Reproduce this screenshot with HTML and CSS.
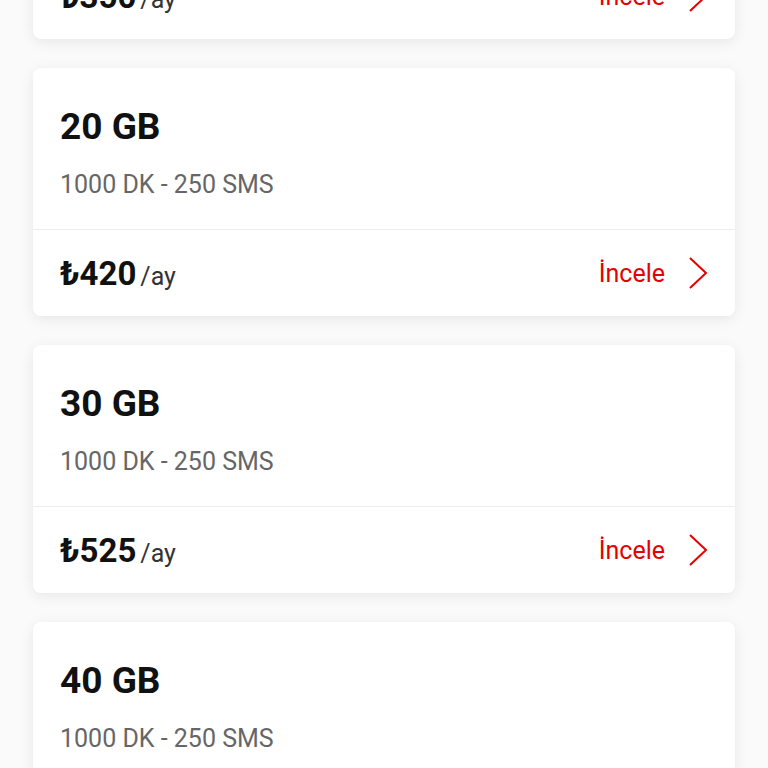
FILE: index.html
```html
<!doctype html>
<html lang="tr">
  <head>
    <meta charset="UTF-8" />
    <meta name="viewport" content="width=device-width, initial-scale=1.0" />
    <title>Paketler</title>
    <link rel="stylesheet" href="styles.css">
  </head>
  <body>
    <div id="package-list">
      <div class="package-card">
        <div class="package-info">
          <div class="package-title">10 GB</div>
          <div class="package-desc">1000 DK - 250 SMS</div>
        </div>
        <div class="package-footer">
          <div class="package-price"><span class="amount">₺350</span><span class="period">/ay</span></div>
          <a class="package-link" href="#">İncele
            <svg class="chevron" viewBox="0 0 20 32" width="20" height="32"><path d="M2 1 L18 16 L2 31" /></svg>
          </a>
        </div>
      </div>

      <div class="package-card">
        <div class="package-info">
          <div class="package-title">20 GB</div>
          <div class="package-desc">1000 DK - 250 SMS</div>
        </div>
        <div class="package-footer">
          <div class="package-price"><span class="amount">₺420</span><span class="period">/ay</span></div>
          <a class="package-link" href="#">İncele
            <svg class="chevron" viewBox="0 0 20 32" width="20" height="32"><path d="M2 1 L18 16 L2 31" /></svg>
          </a>
        </div>
      </div>

      <div class="package-card">
        <div class="package-info">
          <div class="package-title">30 GB</div>
          <div class="package-desc">1000 DK - 250 SMS</div>
        </div>
        <div class="package-footer">
          <div class="package-price"><span class="amount">₺525</span><span class="period">/ay</span></div>
          <a class="package-link" href="#">İncele
            <svg class="chevron" viewBox="0 0 20 32" width="20" height="32"><path d="M2 1 L18 16 L2 31" /></svg>
          </a>
        </div>
      </div>

      <div class="package-card">
        <div class="package-info">
          <div class="package-title">40 GB</div>
          <div class="package-desc">1000 DK - 250 SMS</div>
        </div>
        <div class="package-footer">
          <div class="package-price"><span class="amount">₺630</span><span class="period">/ay</span></div>
          <a class="package-link" href="#">İncele
            <svg class="chevron" viewBox="0 0 20 32" width="20" height="32"><path d="M2 1 L18 16 L2 31" /></svg>
          </a>
        </div>
      </div>
    </div>
  </body>
</html>
```

FILE: styles.css
```css
body {
  font-family: Roboto, 'Noto Sans', 'DejaVu Sans', sans-serif;
  margin: 0;
  height: 100vh;
  overflow: hidden;
  background-color: #fafafa;
}
#package-list {
  display: flex;
  flex-direction: column;
  gap: 29px;
  padding: 0 33px;
  margin-top: -209px;
}
.package-card {
  height: 248px;
  background-color: #fff;
  border-radius: 8px;
  box-shadow: 0 3px 14px rgba(0, 0, 0, 0.08);
  display: flex;
  flex-direction: column;
  flex-shrink: 0;
}
.package-info {
  height: 162px;
  box-sizing: border-box;
  padding: 37px 27px 0;
  border-bottom: 1px solid #eee;
}
.package-title {
  font-size: 37px;
  line-height: 44px;
  font-weight: 700;
  color: #111;
}
.package-desc {
  margin-top: 21px;
  font-size: 25px;
  line-height: 30px;
  color: #666;
}
.package-footer {
  flex-grow: 1;
  display: flex;
  align-items: center;
  justify-content: space-between;
  padding: 0 27px;
}
.package-price {
  display: flex;
  align-items: baseline;
  gap: 4px;
}
.amount {
  font-size: 33px;
  font-weight: 700;
  color: #111;
}
.period {
  font-size: 25px;
  color: #333;
}
.package-link {
  display: flex;
  align-items: center;
  gap: 23px;
  font-size: 25px;
  color: #e60000;
  text-decoration: none;
}
.chevron path {
  fill: none;
  stroke: #e60000;
  stroke-width: 2;
}
```
